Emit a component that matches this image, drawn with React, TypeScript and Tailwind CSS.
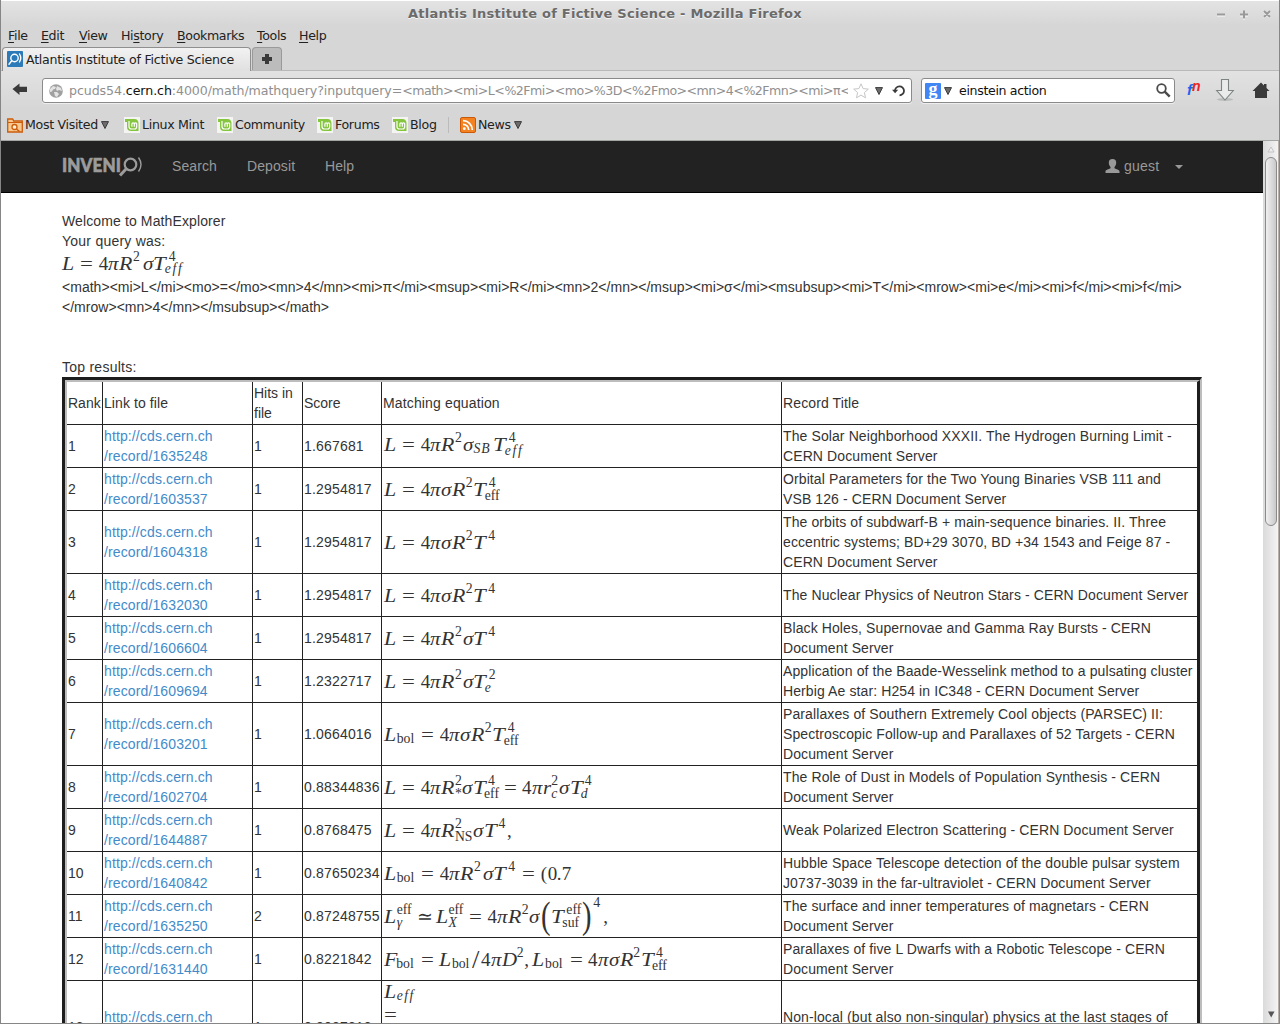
import React from "react";
import type { ReactNode } from "react";

/* ---------- Math typesetting ---------- */

const glyphBox: Record<string, string> = {
  L: "w-[12.7px]", R: "w-[13.6px]", T: "w-[11.2px]", D: "w-[15px]", F: "w-[12.200px]",
  "4": "w-[9.5px]", "π": "w-[11.2px]", "σ": "w-[10.9px]", r: "w-[8.4px]", ",": "w-[8px]",
  "/": "w-[9.2px]", "(": "w-[7px]", "0": "w-[9.2px]", "7": "w-[9.2px]", ".": "w-[5px]",
  "=": "w-[13px] mx-[5.5px]", "≃": "w-[13px] mx-[5.5px]",
};
const glyphInk: Record<string, string> = {
  L: "italic scale-x-[1.15]", R: "italic scale-x-[1.15]", T: "italic scale-x-[1.2]",
  D: "italic scale-x-[1.1]", F: "italic scale-x-[1.15]", "π": "italic scale-x-[1.1]",
  "σ": "italic scale-x-[1.1]", r: "italic scale-x-[1.1]", "/": "scale-x-[1.4] scale-y-[1.3] font-light",
  "=": "scale-x-[1.2]",
};

function Run({ t }: { t: string }) {
  return (
    <>
      {Array.from(t).map((ch, i) => (
        <span key={i} className={`inline-block shrink-0 ${glyphBox[ch] ?? ""}`}>
          <span className={`inline-block origin-left ${glyphInk[ch] ?? ""}`}>{ch}</span>
        </span>
      ))}
    </>
  );
}

function Scripts({ sup, sub, w, it, shift }: { sup?: string; sub?: string; w: string; it?: boolean; shift?: string }) {
  return (
    <span className={`-mt-px flex shrink-0 flex-col text-[13.7px] leading-[12px] ${w}`}>
      <span className={`h-[13px] ${shift ?? ""}`}>{sup}</span>
      {sub && <span className={`h-3 ${it ? "italic" : ""} ${sup ? "" : "-mt-[2px]"}`}>{sub}</span>}
    </span>
  );
}

function Eq({ children, cls = "mt-[2px]" }: { children: ReactNode; cls?: string }) {
  return (
    <span className={`flex h-6 pl-px font-['Liberation_Serif',serif] text-[19px] leading-6 whitespace-pre text-[#333] ${cls}`}>
      {children}
    </span>
  );
}

const Sq = () => <Scripts sup="2" w="w-[7.6px]" />;
const T4 = () => (
  <>
    <Run t="T" />
    <Scripts sup="4" w="w-[10px]" shift="pl-[3.5px]" />
  </>
);
const Teff = () => (
  <>
    <Run t="T" />
    <Scripts sup="4" sub="eff" w="w-[15px]" shift="pl-[4px]" />
  </>
);
const Bol = () => <Scripts sub="bol" w="w-[19px]" />;
const EffIt = () => <Scripts sub="eff" it w="w-[20px] tracking-[1.5px]" />;

/* ---------- Data ---------- */

type Row = { n: string; rec: string; hits: string; score: string; eq: ReactNode; title: string[]; h: string };

const H2 = "h-[43px]";
const H3 = "h-[63px]";

const rows: Row[] = [
  { n: "1", rec: "1635248", hits: "1", score: "1.667681", h: H2, title: ["The Solar Neighborhood XXXII. The Hydrogen Burning Limit -", "CERN Document Server"],
    eq: <Eq cls="-mt-[2px]"><Run t="L=4πR" /><Sq /><Run t="σ" /><Scripts sub="SB" it w="w-[20px] tracking-[1px]" /><Run t="T" /><Scripts sup="4" sub="eff" it shift="pl-[4px] tracking-normal" w="w-[20px] tracking-[1.8px]" /></Eq> },
  { n: "2", rec: "1603537", hits: "1", score: "1.2954817", h: H2, title: ["Orbital Parameters for the Two Young Binaries VSB 111 and", "VSB 126 - CERN Document Server"],
    eq: <Eq><Run t="L=4πσR" /><Sq /><Teff /></Eq> },
  { n: "3", rec: "1604318", hits: "1", score: "1.2954817", h: H3, title: ["The orbits of subdwarf-B + main-sequence binaries. II. Three", "eccentric systems; BD+29 3070, BD +34 1543 and Feige 87 -", "CERN Document Server"],
    eq: <Eq><Run t="L=4πσR" /><Sq /><T4 /></Eq> },
  { n: "4", rec: "1632030", hits: "1", score: "1.2954817", h: H2, title: ["The Nuclear Physics of Neutron Stars - CERN Document Server"],
    eq: <Eq><Run t="L=4πσR" /><Sq /><T4 /></Eq> },
  { n: "5", rec: "1606604", hits: "1", score: "1.2954817", h: H2, title: ["Black Holes, Supernovae and Gamma Ray Bursts - CERN", "Document Server"],
    eq: <Eq><Run t="L=4πR" /><Sq /><Run t="σ" /><T4 /></Eq> },
  { n: "6", rec: "1609694", hits: "1", score: "1.2322717", h: H2, title: ["Application of the Baade-Wesselink method to a pulsating cluster", "Herbig Ae star: H254 in IC348 - CERN Document Server"],
    eq: <Eq><Run t="L=4πR" /><Sq /><Run t="σT" /><Scripts sup="2" sub="e" it w="w-[12px]" shift="pl-[4px]" /></Eq> },
  { n: "7", rec: "1603201", hits: "1", score: "1.0664016", h: H3, title: ["Parallaxes of Southern Extremely Cool objects (PARSEC) II:", "Spectroscopic Follow-up and Parallaxes of 52 Targets - CERN", "Document Server"],
    eq: <Eq><Run t="L" /><Bol /><Run t="=4πσR" /><Sq /><Teff /></Eq> },
  { n: "8", rec: "1602704", hits: "1", score: "0.88344836", h: H2, title: ["The Role of Dust in Models of Population Synthesis - CERN", "Document Server"],
    eq: <Eq><Run t="L=4πR" /><Scripts sup="2" sub="*" w="w-[7px]" /><Run t="σ" /><Teff /><span className="-ml-px" /><Run t="=4πr" /><Scripts sup="2" sub="c" it w="w-[7.5px]" /><Run t="σT" /><Scripts sup="4" sub="d" it w="w-[12px]" shift="pl-[4px]" /></Eq> },
  { n: "9", rec: "1644887", hits: "1", score: "0.8768475", h: H2, title: ["Weak Polarized Electron Scattering - CERN Document Server"],
    eq: <Eq><Run t="L=4πR" /><Scripts sup="2" sub="NS" w="w-[18px]" /><Run t="σ" /><T4 /><span className="w-[2px]" /><Run t="," /></Eq> },
  { n: "10", rec: "1640842", hits: "1", score: "0.87650234", h: H2, title: ["Hubble Space Telescope detection of the double pulsar system", "J0737-3039 in the far-ultraviolet - CERN Document Server"],
    eq: <Eq><Run t="L" /><Bol /><Run t="=4πR" /><Sq /><span className="w-px" /><Run t="σ" /><T4 /><span className="w-[2px]" /><Run t="=(0.7" /></Eq> },
  { n: "11", rec: "1635250", hits: "2", score: "0.87248755", h: H2, title: ["The surface and inner temperatures of magnetars - CERN", "Document Server"],
    eq: (
      <Eq>
        <Run t="L" /><Scripts sup="eff" sub="γ" it w="w-[15px]" />
        <Run t="≃L" /><Scripts sup="eff" sub="X" it w="w-[15px]" />
        <Run t="=4πR" /><Sq /><Run t="σ" />
        <span className="ml-px w-[10px] origin-left scale-x-[0.75] text-[38px] leading-[20px]">(</span>
        <Run t="T" /><Scripts sup="eff" sub="suf" w="w-[19px]" shift="pl-[4px]" />
        <span className="ml-px w-[10px] origin-left scale-x-[0.75] text-[38px] leading-[20px]">)</span>
        <span className="-mt-[8px] w-[9px] pl-px text-[14px] leading-[12px]">4</span>
        <span className="w-[2px]" /><Run t="," />
      </Eq>
    ) },
  { n: "12", rec: "1631440", hits: "1", score: "0.8221842", h: H2, title: ["Parallaxes of five L Dwarfs with a Robotic Telescope - CERN", "Document Server"],
    eq: <Eq><Run t="F" /><Bol /><Run t="=L" /><Bol /><span className="w-px" /><Run t="/4πD" /><Sq /><Run t=",L" /><Bol /><Run t="=4πσR" /><Sq /><Teff /></Eq> },
  { n: "13", rec: "1630911", hits: "1", score: "0.8087818", h: "h-[93px]", title: ["Non-local (but also non-singular) physics at the last stages of", "gravitational collapse - CERN Document Server"],
    eq: (
      <div className="h-[92px]">
        <Eq cls="-mt-px"><Run t="L" /><EffIt /></Eq>
        <Eq cls="-mt-px"><span className="-ml-[6px] flex"><Run t="=" /></span></Eq>
      </div>
    ) },
];

/* ---------- Chrome pieces ---------- */

function Down({ cls = "" }: { cls?: string }) {
  return (
    <svg width="8" height="8" viewBox="0 0 8 8" className={`shrink-0 ${cls}`}>
      <path d="M.5.6h7L4 7.500z" fill="#6c6c6c" stroke="#3c3c3c" />
    </svg>
  );
}

function Mint() {
  return (
    <svg width="16" height="16" viewBox="0 0 16 16" className="mr-0.5 shrink-0">
      <rect width="16" height="16" fill="#f4f4f2" />
      <path d="M1 2h9.500Q14.500 2 14.500 6.500V14H7Q3 14 3 10V5H1z" fill="#86c540" />
      <path d="M5 4v5.500q0 2.500 2.500 2.500h3q2.200 0 2.200-2.500V7q0-1.200-1.200-1.200T10.300 7v2.700M10.300 7q0-1.200-1.200-1.200T7.900 7v2.700" fill="none" stroke="#fff" strokeWidth="1.200" />
    </svg>
  );
}

function Bookmark({ w, icon, label, children }: { w: string; icon: ReactNode; label: string; children?: ReactNode }) {
  return (
    <div className={`flex shrink-0 items-center ${w}`}>
      {icon}
      <span>{label}</span>
      {children}
    </div>
  );
}

const menus: [string, string, string, string][] = [
  ["", "F", "ile", "w-[33px]"], ["", "E", "dit", "w-[38px]"], ["", "V", "iew", "w-[42px]"],
  ["Hi", "s", "tory", "w-[56px]"], ["", "B", "ookmarks", "w-[80px]"], ["", "T", "ools", "w-[42px]"], ["", "H", "elp", "w-[40px]"],
];

function Chrome() {
  return (
    <header className="h-[141px] border-b border-[#a3a6a3] bg-[#d6d6d6] font-['DejaVu_Sans',sans-serif] text-[12.6px] whitespace-nowrap text-[#222]">
      <div className="flex h-[26px] items-center border-t border-white bg-linear-to-b from-[#e3e3e3] to-[#d6d6d6]">
        <h1 className="ml-[407px] w-[805px] text-[13px] font-bold tracking-[0.25px] text-[#6b6b6b] [text-shadow:0_1px_0_#f4f4f4]">
          Atlantis Institute of Fictive Science - Mozilla Firefox
        </h1>
        <svg width="60" height="12" viewBox="0 0 60 12" fill="none" strokeWidth="2">
          <path d="M4 7.500h8M27 7.500h8M31 3.500v8M51 3.500l6 6M57 3.500l-6 6" stroke="#fafafa" />
          <path d="M4 6.500h8M27 6.500h8M31 2.500v8M51 3l6 6M57 3l-6 6" stroke="#999" />
        </svg>
      </div>
      <nav className="flex h-[21px] items-center pl-[7px] tracking-[-0.35px]">
        {menus.map(([a, u, b, w]) => (
          <span key={u + b} className={w}>{a}<span className="underline underline-offset-2">{u}</span>{b}</span>
        ))}
      </nav>
      <div className="flex h-[24px] items-end border-b border-[#b9b9b9] pl-px">
        <div className="-mb-px flex h-6 w-[249px] items-center rounded-t border border-b-0 border-[#8f8f8f] bg-linear-to-b from-[#f2f2f2] to-[#e0e0e0] pl-1">
          <svg width="16" height="16" viewBox="0 0 16 16" className="mr-[3px] mb-px">
            <rect width="16" height="16" rx="1" fill="#2c7ab8" />
            <g fill="none" stroke="#fff" strokeWidth="1.400" strokeLinecap="round">
              <circle cx="7.500" cy="7" r="3.700" />
              <path d="M4.700 9.800L2 13.200M12.500 3q2.500 4 0 8" />
            </g>
          </svg>
          <span className="pt-0.5 tracking-[-0.25px]">Atlantis Institute of Fictive Science</span>
        </div>
        <div className="ml-px flex h-[23px] w-[30px] items-center justify-center rounded-t border border-b-0 border-[#9a9a9a] bg-[#bcbcbc]">
          <svg width="12" height="12" viewBox="0 0 12 12"><path d="M4 1h4v3h3v4H8v3H4V8H1V4h3z" fill="#3a3a3a" /></svg>
        </div>
      </div>
      <div className="flex h-[38px] items-center bg-linear-to-b from-[#e2e2e2] to-[#d6d6d6]">
        <svg width="16" height="16" viewBox="0 0 16 16" className="ml-[11px] shrink-0">
          <path d="M.5 7L7.500 1.500v3.300H15v5.200H7.500V13z" fill="#3a3a3a" />
        </svg>
        <div className="mt-px ml-[14px] flex h-[25px] w-[870px] shrink-0 items-center rounded-[3px] border border-[#8a8a8a] bg-white shadow-[0_1px_0_#eee]">
          <svg width="14" height="14" viewBox="0 0 14 14" className="ml-[6px] shrink-0">
            <circle cx="7" cy="7" r="6.800" fill="#a0a0a0" />
            <path d="M1 5l3-3 3 1-1 2-2 .500-1 2-2 .5zM8 2l4 2 1 3-3-1-2 1-1-2zM5 8l3 0 2 2-2 3-2-1z" fill="#e4e4e4" />
          </svg>
          <div className="ml-[6px] w-[779px] shrink-0 overflow-hidden pt-0.5 tracking-[-0.08px] text-[#8f8f8f]">
            pcuds54.<span className="text-[#111]">cern.ch</span>:4000/math/mathquery?inputquery=
            <span className="tracking-[-0.52px]">&lt;math&gt;&lt;mi&gt;L&lt;%2Fmi&gt;&lt;mo&gt;%3D&lt;%2Fmo&gt;&lt;mn&gt;4&lt;%2Fmn&gt;&lt;mi&gt;π&lt;</span>
          </div>
          <svg width="16" height="16" viewBox="0 0 16 16" className="ml-[5px] shrink-0">
            <path d="M8 .8l2.100 4.800 5.200.5-3.900 3.500 1.100 5.200L8 12.100l-4.500 2.700 1.100-5.200L.7 6.100l5.200-.5z" fill="#fff" stroke="#c6c6c6" />
          </svg>
          <Down cls="ml-[6px]" />
          <svg width="14" height="14" viewBox="0 0 14 14" className="ml-[9px] shrink-0">
            <path d="M3 7a4.500 4.500 0 1 1 4.500 4.300" fill="none" stroke="#3a3a3a" strokeWidth="1.800" />
            <path d="M0 5.700h6.200L3.100 9.300z" fill="#3a3a3a" />
          </svg>
        </div>
        <div className="mt-px ml-[9px] flex h-[25px] w-[254px] shrink-0 items-center rounded-[3px] border border-[#8a8a8a] bg-white shadow-[0_1px_0_#eee]">
          <span className="ml-[3px] flex h-4 w-4 items-center justify-center rounded-[1px] bg-[#4285f4] pb-[4px] font-['Liberation_Serif',serif] text-[18px] leading-none font-bold text-white">g</span>
          <Down cls="ml-[3px]" />
          <span className="ml-[7px] w-[196px] pt-0.5 tracking-[-0.35px] text-[#111]">einstein action</span>
          <svg width="16" height="16" viewBox="0 0 16 16" className="shrink-0" fill="none" stroke="#4a4a4a">
            <circle cx="6.500" cy="5.500" r="4.300" strokeWidth="1.800" />
            <path d="M9.700 8.700l5 5" strokeWidth="2.400" />
          </svg>
        </div>
        <span className="ml-[12px] flex w-[28px] shrink-0 font-['Liberation_Sans',sans-serif] font-bold italic">
          <span className="text-[15px] leading-4 text-[#1f62ef]">f</span>
          <span className="-mt-[4px] text-[14px] leading-4 text-[#ee2525]">n</span>
        </span>
        <svg width="20" height="24" viewBox="0 0 20 24" className="shrink-0">
          <ellipse cx="10" cy="21.500" rx="8" ry="1.500" fill="#b9bcbc" />
          <path d="M6.500 1.500h7v11h4.800L10 22 1.700 12.500h4.800z" fill="#e9eceb" stroke="#7d8583" strokeWidth="1.100" />
        </svg>
        <svg width="18" height="17" viewBox="0 0 18 17" className="ml-[17px] shrink-0">
          <path d="M9 .5l3 3V2h2.500v4L17.500 9H15v7H3V9H.5z" fill="#3a3a3a" />
        </svg>
      </div>
      <div className="flex h-[31px] items-center pt-px pl-[6px] tracking-[-0.32px]">
        <Bookmark w="w-[117px]" label="Most Visited" icon={
          <svg width="16" height="16" viewBox="0 0 16 16" className="mr-0.5 shrink-0">
            <path d="M.7 15V2h5l1 2h8.600v11z" fill="#f8c88e" stroke="#cb5c0c" strokeWidth="1.300" />
            <path d="M1 5.500h14" stroke="#cb5c0c" />
            <circle cx="7.500" cy="10" r="2.500" fill="#fff0d8" stroke="#cb5c0c" strokeWidth="1.300" />
            <path d="M9.500 12l3 2.500" stroke="#cb5c0c" strokeWidth="1.500" />
          </svg>
        }><Down cls="ml-[3px]" /></Bookmark>
        <Bookmark w="w-[93px]" label="Linux Mint" icon={<Mint />} />
        <Bookmark w="w-[100px]" label="Community" icon={<Mint />} />
        <Bookmark w="w-[75px]" label="Forums" icon={<Mint />} />
        <Bookmark w="w-[56px]" label="Blog" icon={<Mint />} />
        <span className="mr-[11px] h-4 w-px bg-[#bbb]" />
        <Bookmark w="w-[80px]" label="News" icon={
          <svg width="16" height="16" viewBox="0 0 16 16" className="mr-0.5 shrink-0">
            <rect x=".5" y=".5" width="15" height="15" rx="1.500" fill="#f58220" stroke="#c95a0a" />
            <g fill="none" stroke="#fff" strokeWidth="1.700"><path d="M3 7.300A5.700 5.700 0 0 1 8.700 13M3 3.700A9.300 9.300 0 0 1 12.300 13" /></g>
            <circle cx="4.300" cy="11.700" r="1.400" fill="#fff" />
          </svg>
        }><Down cls="ml-[3px]" /></Bookmark>
      </div>
    </header>
  );
}

/* ---------- Page ---------- */

function NavBar() {
  return (
    <nav className="flex h-[52px] items-center border-b border-black bg-[#222] pb-0.5 pl-[61px] tracking-[0.1px] text-[#999]">
      <svg width="81" height="22" viewBox="0 0 81 22" className="mt-[3px] shrink-0">
        <text x="0" y="16" textLength="59" lengthAdjust="spacingAndGlyphs" fill="#9c9c9c" stroke="#9c9c9c" strokeWidth=".6" fontFamily="Lato, sans-serif" fontWeight="900" fontSize="18">INVENI</text>
        <g fill="none" stroke="#9c9c9c">
          <circle cx="68.500" cy="8.500" r="5.800" strokeWidth="2.200" />
          <path d="M64 13l-6 6.500" strokeWidth="3" />
          <path d="M76.500 1.500q5 7 0 14" strokeWidth="1.400" />
        </g>
      </svg>
      <a className="ml-[29px] w-[75px]">Search</a>
      <a className="w-[78px]">Deposit</a>
      <a className="w-[780px]">Help</a>
      <svg width="15" height="14" viewBox="0 0 15 14" className="shrink-0">
        <path d="M7.500 0C5 0 3.600 1.600 3.800 4c.1 1.600.8 3 1.700 3.900v1.400C4 10.300.5 10.800.5 12.500V14h14v-1.500c0-1.700-3.500-2.200-5-3.200V7.900c.9-.9 1.600-2.300 1.700-3.900.2-2.400-1.200-4-3.700-4z" fill="#999" />
      </svg>
      <a className="ml-[4px] w-[51px] tracking-[0.2px]">guest</a>
      <svg width="8" height="4" viewBox="0 0 8 4" className="mt-[2px] shrink-0"><path d="M0 0h8L4 4z" fill="#999" /></svg>
    </nav>
  );
}

const cell = "flex items-center border-r border-[#222] pl-px";

function Results() {
  return (
    <div className="mt-0 h-[700px] w-[1140px] border-t-3 border-r-2 border-l-3 border-t-[#1d1d1d] border-r-[#bdbdbd] border-l-[#1d1d1d]">
      <div className="border-t-2 border-r-3 border-l-2 border-t-[#bdbdbd] border-r-[#1d1d1d] border-l-[#bdbdbd]">
        <div className="grid h-[43px] grid-cols-[36px_150px_50px_79px_400px_415px] border-b border-[#222]">
          <div className={cell}>Rank</div>
          <div className={`${cell} tracking-[0.08px]`}>Link to file</div>
          <div className={cell}>Hits in<br />file</div>
          <div className={cell}>Score</div>
          <div className={`${cell} tracking-[0.14px]`}>Matching equation</div>
          <div className="flex items-center pl-px tracking-[0.12px]">Record Title</div>
        </div>
        {rows.map((r) => (
          <div key={r.n} className={`grid grid-cols-[36px_150px_50px_79px_400px_415px] border-b border-[#222] ${r.h}`}>
            <div className={cell}>{r.n}</div>
            <div className={`${cell} tracking-[0.12px] text-[#428bca]`}><a>http://cds.cern.ch<br />/record/{r.rec}</a></div>
            <div className={cell}>{r.hits}</div>
            <div className={`${cell} tracking-[0.18px]`}>{r.score}</div>
            <div className={cell}>{r.eq}</div>
            <div className="flex flex-col justify-center pl-px tracking-[0.105px] whitespace-nowrap">
              {r.title.map((t) => <span key={t}>{t}</span>)}
            </div>
          </div>
        ))}
      </div>
    </div>
  );
}

function Scrollbar() {
  return (
    <aside className="flex w-[15px] shrink-0 flex-col items-center bg-linear-to-r from-[#dadada] to-[#f4f4f4]">
      <svg width="8" height="16" viewBox="0 0 8 16" className="shrink-0"><path d="M1 11h6L4 6z" fill="#eee" stroke="#c4c4c4" /></svg>
      <div className="h-[369px] w-3 shrink-0 rounded-full border border-[#8a8a8a] bg-linear-to-r from-[#f0f0f0] to-[#c9c9c9]" />
      <div className="grow" />
      <svg width="8" height="18" viewBox="0 0 8 18" className="shrink-0"><path d="M1 6.500h6.500L4.200 12.500z" fill="#555" /></svg>
    </aside>
  );
}

export default function App() {
  return (
    <div className="flex h-[1024px] w-[1280px] flex-col overflow-hidden border-r border-b border-l border-[#868686] bg-white">
      <Chrome />
      <div className="flex min-h-0 grow">
        <main className="w-[1262px] shrink-0 overflow-hidden font-['Liberation_Sans',sans-serif] text-[14px] leading-5 text-[#333]">
          <NavBar />
          <div className="pt-[18px] pl-[61px]">
            <p className="tracking-[0.12px]">Welcome to MathExplorer</p>
            <p className="tracking-[0.24px]">Your query was:</p>
            <div className="flex h-[26px] items-start">
              <Eq cls="-ml-px pt-px"><Run t="L=4πR" /><Sq /><span className="w-[2px]" /><Run t="σT" /><Scripts sup="4" sub="eff" it shift="pl-[4px] tracking-normal" w="w-[20px] tracking-[1.8px]" /></Eq>
            </div>
            <p className="tracking-[0.027px] whitespace-nowrap">
              &lt;math&gt;&lt;mi&gt;L&lt;/mi&gt;&lt;mo&gt;=&lt;/mo&gt;&lt;mn&gt;4&lt;/mn&gt;&lt;mi&gt;π&lt;/mi&gt;&lt;msup&gt;&lt;mi&gt;R&lt;/mi&gt;&lt;mn&gt;2&lt;/mn&gt;&lt;/msup&gt;&lt;mi&gt;σ&lt;/mi&gt;&lt;msubsup&gt;&lt;mi&gt;T&lt;/mi&gt;&lt;mrow&gt;&lt;mi&gt;e&lt;/mi&gt;&lt;mi&gt;f&lt;/mi&gt;&lt;mi&gt;f&lt;/mi&gt;
              <br />
              &lt;/mrow&gt;&lt;mn&gt;4&lt;/mn&gt;&lt;/msubsup&gt;&lt;/math&gt;
            </p>
            <p className="mt-10 tracking-[0.25px]">Top results:</p>
            <Results />
          </div>
        </main>
        <Scrollbar />
        <div className="w-px bg-[#b5b0aa]" />
      </div>
    </div>
  );
}
